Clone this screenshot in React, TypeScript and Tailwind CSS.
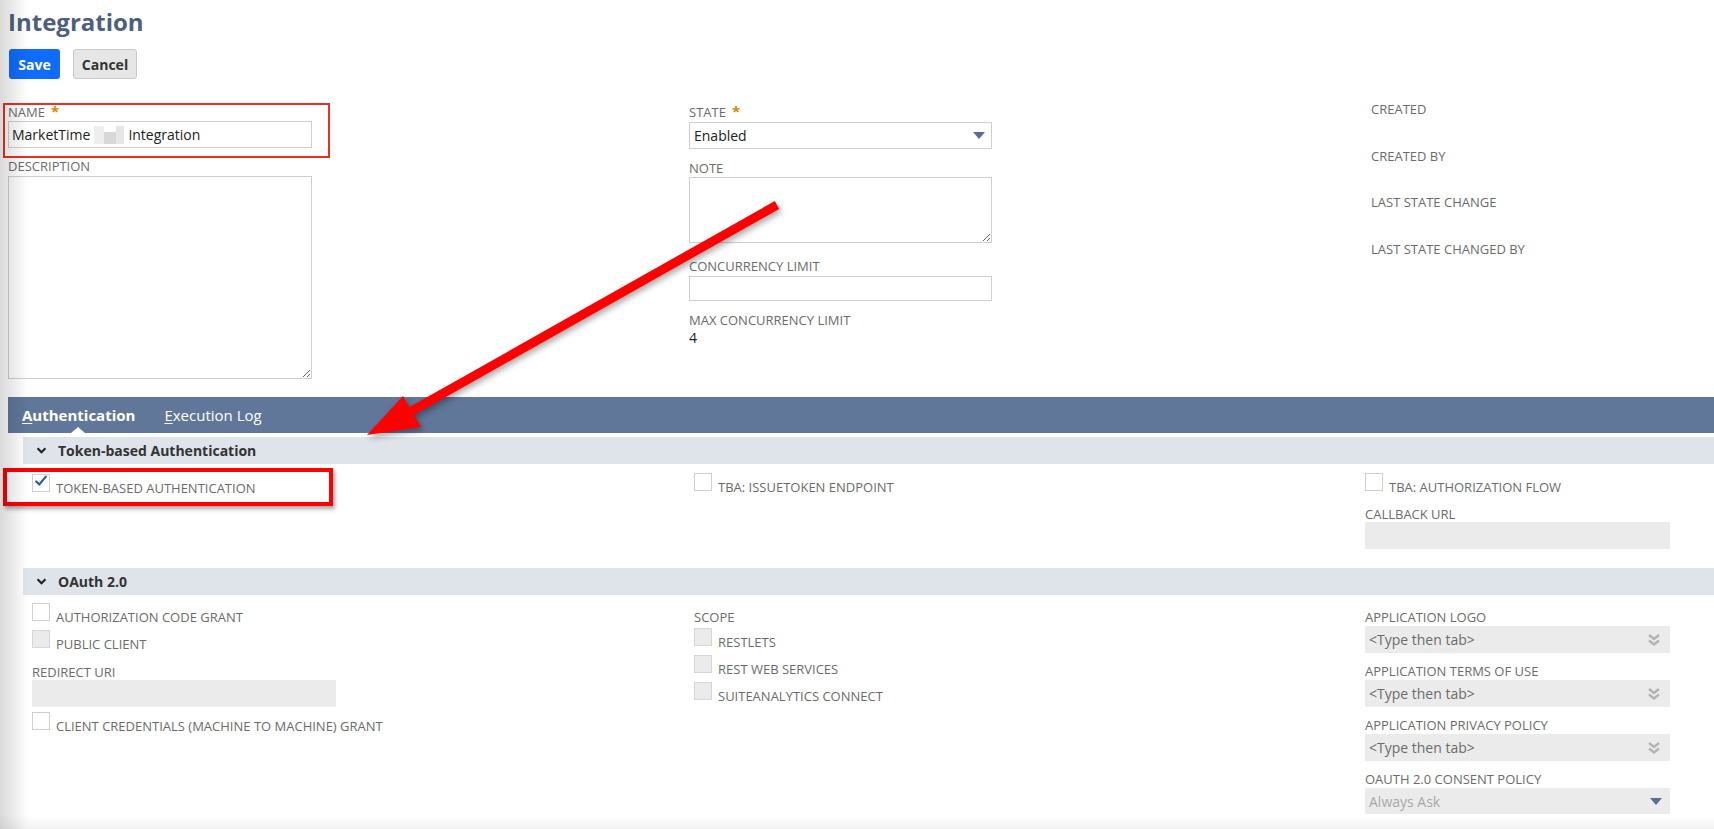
import React from 'react';

const LABEL = 'text-[13px] leading-[16px] uppercase text-[#6b6b6b]';

function Label({ text, required }: { text: string; required?: boolean }) {
  return (
    <div className={LABEL}>
      {text}
      {required && <span className="ml-[6px] text-[15px] font-bold text-[#d88a00]">*</span>}
    </div>
  );
}

function Box({ checked, disabled }: { checked?: boolean; disabled?: boolean }) {
  return (
    <div
      className={`relative h-[18px] w-[18px] shrink-0 border ${disabled ? 'border-[#d6d6d6] bg-[#ebebeb]' : 'border-[#cfcfcf] bg-white'}`}
    >
      {checked && (
        <svg viewBox="0 0 16 16" className="absolute left-[1px] top-[-1px] h-[14px] w-[14px]">
          <path d="M2.5 8.5 L6 12 L13.5 3" fill="none" stroke="#2f5cae" strokeWidth="2.6" strokeLinecap="round" strokeLinejoin="round" />
        </svg>
      )}
    </div>
  );
}

function CheckRow({ text, checked, disabled }: { text: string; checked?: boolean; disabled?: boolean }) {
  return (
    <div className="flex h-[27px] items-start">
      <Box checked={checked} disabled={disabled} />
      <span className="ml-[6px] mt-[6px] text-[13px] leading-[16px] text-[#6b6b6b]">{text}</span>
    </div>
  );
}

function DoubleChevron() {
  return (
    <svg viewBox="0 0 14 14" className="h-[14px] w-[14px]">
      <path d="M2 2 L7 6 L12 2 M2 7.5 L7 11.5 L12 7.5" fill="none" stroke="#b3b3b3" strokeWidth="2.4" />
    </svg>
  );
}

function Triangle() {
  return (
    <svg viewBox="0 0 12 7" className="h-[7px] w-[12px]">
      <path d="M0 0 H12 L6 7 Z" fill="#5a6f90" />
    </svg>
  );
}

function TypeTab({ label }: { label: string }) {
  return (
    <div className="mt-[10px]">
      <Label text={label} />
      <div className="mt-[1px] flex h-[27px] w-[305px] items-center justify-between bg-[#ebebeb] pl-[4px] pr-[9px]">
        <span className="text-[14px] text-[#6b6b6b]">&lt;Type then tab&gt;</span>
        <DoubleChevron />
      </div>
    </div>
  );
}

function SectionHeader({ title }: { title: string }) {
  return (
    <div className="ml-[23px] flex h-[27px] items-center bg-[#dfe3ea]">
      <svg viewBox="0 0 12 8" className="ml-[13px] h-[7px] w-[11px]">
        <path d="M1.5 1.5 L6 6 L10.5 1.5" fill="none" stroke="#222" strokeWidth="2.4" />
      </svg>
      <span className="ml-[11px] text-[14px] font-bold text-[#333]">{title}</span>
    </div>
  );
}

export default function App() {
  return (
    <div className="relative h-[829px] w-[1714px] overflow-hidden bg-white font-['Open_Sans',sans-serif] text-[#333]">
      <div className="pl-[8px] pt-[6px] text-[24px] font-bold leading-[32px] text-[#4d5f7c]">Integration</div>

      <div className="mt-[11px] flex gap-[13px] pl-[9px]">
        <button type="button" className="h-[30px] w-[51px] rounded-[3px] bg-[#0f6cff] text-[14px] font-bold text-white">
          Save
        </button>
        <button
          type="button"
          className="h-[30px] w-[64px] rounded-[3px] border border-[#c9c9c9] bg-[#e6e6e6] text-[14px] font-bold text-[#333]"
        >
          Cancel
        </button>
      </div>

      <div className="mt-[24px] grid grid-cols-[681px_682px_1fr] pl-[8px]">
        <div>
          <Label text="NAME" required />
          <div className="mt-[1px] flex h-[27px] w-[304px] items-center border border-[#cfcfcf] pl-[3px] text-[14px] text-[#222]">
            MarketTime
            <span className="mx-[4px] inline-flex h-[18px] w-[30px]">
              <span className="h-full w-[10px] bg-[#eeeeee]" />
              <span className="mt-[6px] h-[12px] w-[12px] bg-[#d8d8d8]" />
              <span className="h-full w-[8px] bg-[#e6e6e6]" />
            </span>
            Integration
          </div>
          <div className="mt-[10px]">
            <Label text="DESCRIPTION" />
          </div>
          <textarea className="mt-[2px] block h-[203px] w-[304px] border border-[#cfcfcf] outline-none" />
        </div>

        <div>
          <Label text="STATE" required />
          <div className="mt-[2px] flex h-[27px] w-[303px] items-center justify-between border border-[#cfcfcf] pl-[4px] pr-[6px] text-[14px] text-[#222]">
            Enabled
            <Triangle />
          </div>
          <div className="mt-[11px]">
            <Label text="NOTE" />
          </div>
          <textarea className="mt-[1px] block h-[66px] w-[303px] border border-[#cfcfcf] outline-none" />
          <div className="mt-[15px]">
            <Label text="CONCURRENCY LIMIT" />
          </div>
          <div className="mt-[2px] h-[25px] w-[303px] border border-[#cfcfcf]" />
          <div className="mt-[11px]">
            <Label text="MAX CONCURRENCY LIMIT" />
          </div>
          <div className="text-[14px] leading-[20px] text-[#222]">4</div>
        </div>

        <div className="-mt-[2px] flex flex-col gap-[30.5px]">
          <Label text="CREATED" />
          <Label text="CREATED BY" />
          <Label text="LAST STATE CHANGE" />
          <Label text="LAST STATE CHANGED BY" />
        </div>
      </div>

      <div className="relative ml-[8px] mt-[18px] flex h-[36px] items-center bg-[#607799] text-[15px] text-white">
        <span className="ml-[14px] font-bold">
          <span className="underline underline-offset-2">A</span>uthentication
        </span>
        <span className="ml-[29px]">
          <span className="underline underline-offset-2">E</span>xecution Log
        </span>
        <span className="absolute bottom-0 left-[63px] h-0 w-0 border-x-[7px] border-b-[6px] border-x-transparent border-b-white" />
      </div>

      <div className="mt-[4px]">
        <SectionHeader title="Token-based Authentication" />
        <div className="grid grid-cols-[662px_671px_1fr] pb-[19px] pl-[32px] pt-[9px]">
          <div className="pt-[1px]">
            <CheckRow text="TOKEN-BASED AUTHENTICATION" checked />
          </div>
          <div>
            <CheckRow text="TBA: ISSUETOKEN ENDPOINT" />
          </div>
          <div>
            <CheckRow text="TBA: AUTHORIZATION FLOW" />
            <div className="mt-[6px]">
              <Label text="CALLBACK URL" />
            </div>
            <div className="h-[27px] w-[305px] bg-[#ebebeb]" />
          </div>
        </div>

        <SectionHeader title="OAuth 2.0" />
        <div className="grid grid-cols-[662px_671px_1fr] pl-[32px] pt-[8px]">
          <div>
            <CheckRow text="AUTHORIZATION CODE GRANT" />
            <CheckRow text="PUBLIC CLIENT" disabled />
            <div className="mt-[7px]">
              <Label text="REDIRECT URI" />
            </div>
            <div className="h-[27px] w-[304px] bg-[#ebebeb]" />
            <div className="mt-[5px]">
              <CheckRow text="CLIENT CREDENTIALS (MACHINE TO MACHINE) GRANT" />
            </div>
          </div>
          <div>
            <div className="mt-[6px]">
              <Label text="SCOPE" />
            </div>
            <div className="mt-[3px]">
              <CheckRow text="RESTLETS" disabled />
              <CheckRow text="REST WEB SERVICES" disabled />
              <CheckRow text="SUITEANALYTICS CONNECT" disabled />
            </div>
          </div>
          <div className="-mt-[4px]">
            <TypeTab label="APPLICATION LOGO" />
            <TypeTab label="APPLICATION TERMS OF USE" />
            <TypeTab label="APPLICATION PRIVACY POLICY" />
            <div className="mt-[10px]">
              <Label text="OAUTH 2.0 CONSENT POLICY" />
              <div className="mt-[1px] flex h-[26px] w-[305px] items-center justify-between bg-[#ebebeb] pl-[4px] pr-[8px]">
                <span className="text-[14px] text-[#a8a8a8]">Always Ask</span>
                <Triangle />
              </div>
            </div>
          </div>
        </div>
      </div>

      {/* annotation overlays */}
      <div className="pointer-events-none absolute left-[3px] top-[103px] h-[55px] w-[327px] border-2 border-[#e8321f]" />
      <div className="pointer-events-none absolute left-[3px] top-[468px] h-[38px] w-[330px] border-[4px] border-[#ff0000] shadow-[2px_3px_4px_rgba(0,0,0,0.35)]" />
      <svg
        className="pointer-events-none absolute left-0 top-0 h-[829px] w-[1714px]"
        viewBox="0 0 1714 829"
        style={{ filter: 'drop-shadow(2px 3px 3px rgba(0,0,0,0.35))' }}
      >
        <line x1="777" y1="205" x2="410" y2="412" stroke="#ff0000" strokeWidth="9" />
        <polygon points="367,435 403,396 421,427" fill="#ff0000" />
      </svg>
      <div className="pointer-events-none absolute left-0 top-0 h-full w-[28px] bg-gradient-to-r from-black/15 to-transparent" />
      <div className="pointer-events-none absolute bottom-0 left-0 h-[14px] w-full bg-gradient-to-t from-black/5 to-transparent" />
    </div>
  );
}
